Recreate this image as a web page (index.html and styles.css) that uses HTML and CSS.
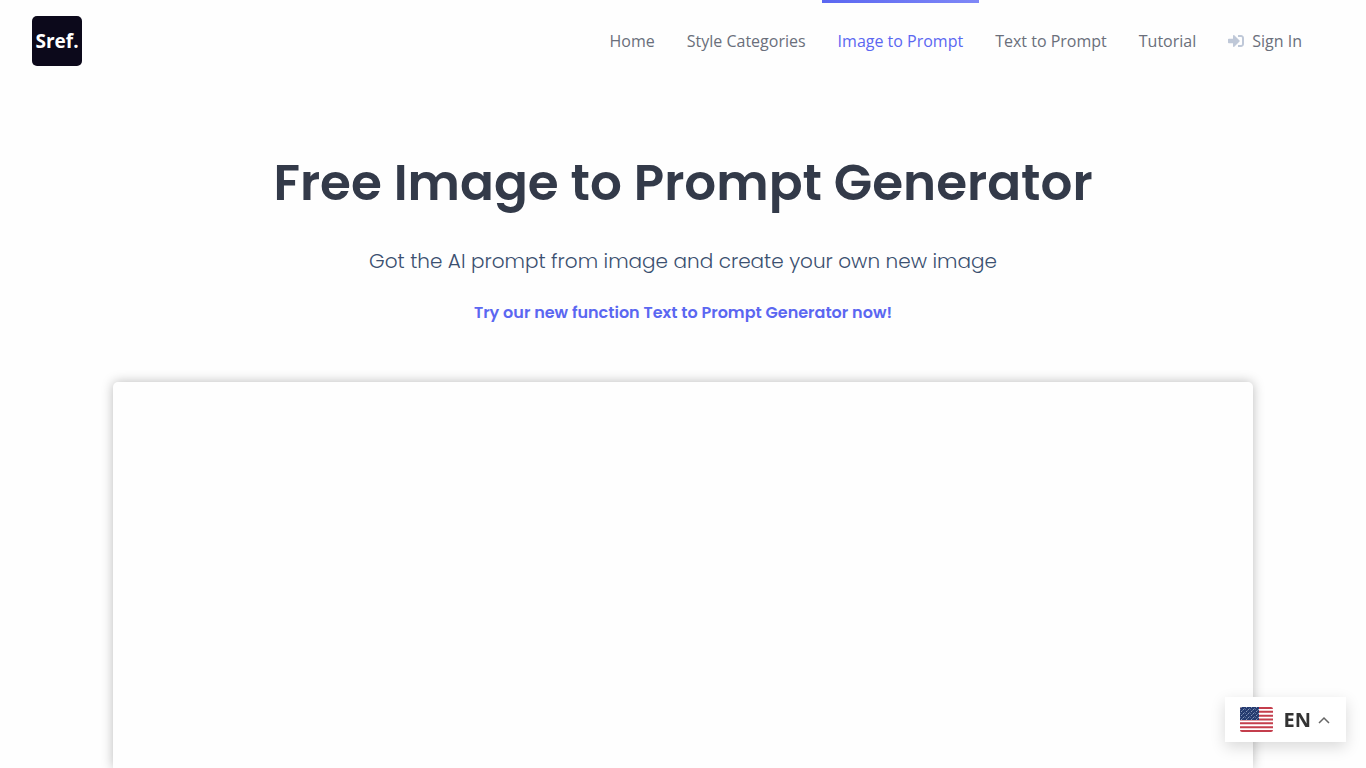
FILE: index.html
```html
<!DOCTYPE html>
<html lang="en">
  <head>
    <meta charset="utf-8" />
    <title>Free Image to Prompt Generator</title>
    <meta name="viewport" content="width=device-width, initial-scale=1.0" />
    <link rel="stylesheet" href="styles.css">
  </head>
  <body>
    <header class="header">
      <a class="logo" href="#">Sref.</a>
      <nav class="nav">
        <a href="#">Home</a>
        <a href="#">Style Categories</a>
        <a class="active" href="#">Image to Prompt</a>
        <a href="#">Text to Prompt</a>
        <a href="#">Tutorial</a>
        <a href="#">
          <svg class="signin-icon" viewBox="0 0 512 512" aria-hidden="true">
            <path d="M416 448h-84c-6.600 0-12-5.400-12-12v-40c0-6.600 5.400-12 12-12h84c17.700 0 32-14.300 32-32V160c0-17.700-14.300-32-32-32h-84c-6.600 0-12-5.400-12-12V76c0-6.600 5.400-12 12-12h84c53 0 96 43 96 96v192c0 53-43 96-96 96zm-47-209L201 71c-15-15-41-4.500-41 17v96H24c-13.300 0-24 10.700-24 24v96c0 13.300 10.700 24 24 24h136v96c0 21.500 26 32 41 17l168-168c9.300-9.400 9.300-24.600 0-34z" />
          </svg>
          Sign In
        </a>
      </nav>
    </header>
    <main class="main">
      <h1>Free Image to Prompt Generator</h1>
      <p class="subtitle">Got the AI prompt from image and create your own new image</p>
      <a class="promo" href="#">Try our new function Text to Prompt Generator now!</a>
      <section class="card"></section>
    </main>
    <button class="language" type="button" aria-label="EN, change language">
      <svg class="flag" viewBox="0 0 33 25" aria-hidden="true">
        <defs>
          <clipPath id="flag-clip"><rect width="33" height="25" rx="2" /></clipPath>
          <pattern id="stars" width="5" height="4" patternUnits="userSpaceOnUse">
            <path d="M1 0h1v1h-1zM3 2h1v1h-1z" fill="#8796b8" />
            <path d="M0 2h1v1h-1zM2 3h1v1h-1zM4 1h1v1h-1z" fill="#526a97" />
          </pattern>
        </defs>
        <g clip-path="url(#flag-clip)">
          <rect width="33" height="25" fill="#fff" />
          <path d="M0 1H33M0 4.850H33M0 8.700H33M0 12.500H33M0 16.300H33M0 20.200H33M0 24H33" stroke="#c43e4c" stroke-width="2" />
          <rect width="19" height="13" fill="#263b70" />
          <rect width="19" height="13" fill="url(#stars)" />
        </g>
      </svg>
      <span>EN</span>
      <svg class="arrow" viewBox="0 0 12 8" aria-hidden="true">
        <path d="M1 7L6 2L11 7" fill="none" stroke="#666" stroke-width="1.500" />
      </svg>
    </button>
  </body>
</html>
```
FILE: styles.css
```css
* {
  box-sizing: border-box;
}
body {
  margin: 0;
  height: 100vh;
  display: flex;
  flex-direction: column;
  overflow: hidden;
  background: #fefefe;
  font-family: "Open Sans", sans-serif;
  font-size: 16px;
}
a {
  text-decoration: none;
}
.header {
  display: flex;
  align-items: center;
  justify-content: space-between;
  padding: 0 48px 0 32px;
}
.logo {
  display: flex;
  align-items: center;
  justify-content: center;
  width: 50px;
  height: 50px;
  border-radius: 5px;
  background: #0c091b;
  color: #fff;
  font-size: 19px;
  font-weight: 700;
}
.nav {
  display: flex;
}
.nav a {
  display: flex;
  align-items: center;
  height: 82px;
  padding: 0 16px;
  border-top: 3px solid transparent;
  border-bottom: 3px solid transparent;
  color: #6a6f7b;
}
.nav .active {
  color: #5b67f1;
  border-image: linear-gradient(to right, #5b67f1, #7f88f7) 3 0 0 0;
}
.signin-icon {
  width: 16px;
  height: 16px;
  margin-right: 8px;
  fill: #bfc8d8;
}
.main {
  flex: 1;
  display: flex;
  flex-direction: column;
  align-items: center;
  padding: 64px 16px 0;
}
h1 {
  margin: 0;
  color: #333a49;
  font-family: Poppins, Inter, sans-serif;
  font-size: 50px;
  font-weight: 600;
  line-height: 74px;
  text-align: center;
}
.subtitle {
  margin: 26px 0 0;
  color: #3b5070;
  font-family: Poppins, Inter, sans-serif;
  font-size: 20px;
  font-weight: 300;
  line-height: 30px;
  text-align: center;
}
.promo {
  margin-top: 25px;
  color: #5b67f1;
  font-family: Poppins, Inter, sans-serif;
  font-weight: 600;
  line-height: 24px;
  text-align: center;
}
.card {
  flex: 1;
  width: 100%;
  max-width: 1140px;
  margin-top: 57px;
  border-radius: 5px 5px 0 0;
  background: #fefefe;
  box-shadow: 0 0 12px rgba(0, 0, 0, 0.27);
}
.language {
  position: fixed;
  right: 20px;
  bottom: 26px;
  display: flex;
  align-items: center;
  height: 45px;
  padding: 0 16px 0 15px;
  border: 0;
  background: #fff;
  box-shadow: 0 5px 15px rgba(0, 0, 0, 0.15);
  color: #333;
  font-family: "Open Sans", sans-serif;
  font-size: 20px;
  font-weight: 700;
}
.flag {
  width: 33px;
  height: 25px;
  margin-right: 11px;
}
.arrow {
  width: 12px;
  height: 8px;
  margin-left: 7px;
}
```
